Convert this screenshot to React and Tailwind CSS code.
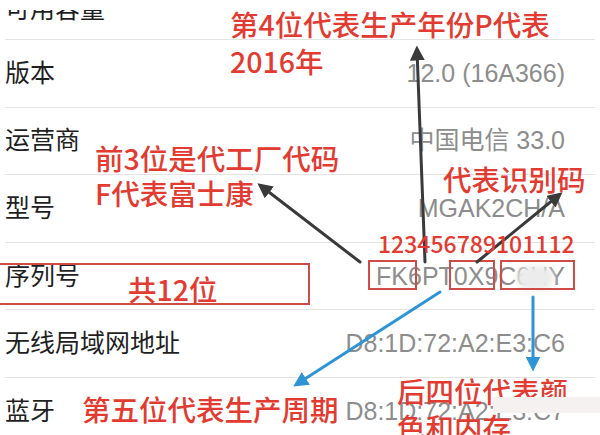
import React from "react";

const rows = [
  { label: "可用容量", value: "", first: true },
  { label: "版本", value: "12.0 (16A366)" },
  { label: "运营商", value: "中国电信 33.0" },
  { label: "型号", value: "MGAK2CH/A" },
  { label: "序列号", value: "FK6PT0X9C6HY" },
  { label: "无线局域网地址", value: "D8:1D:72:A2:E3:C6" },
  { label: "蓝牙", value: "D8:1D:72:A2:E3:C7" },
];

const sysFont = { fontFamily: '"Liberation Sans", "Noto Sans CJK SC", sans-serif' };
const noteFont = { fontFamily: '"Noto Sans CJK SC", "Noto Sans", sans-serif' };

function Row({ label, value, first }) {
  return (
    <div
      className={`mx-[5px] h-[67.6px] shrink-0 flex items-center justify-between border-b border-[#e4e4e4] ${
        first ? "pt-[8px]" : ""
      }`}
    >
      <span className="text-[25px] leading-none text-[#1f1f1f]">{label}</span>
      <span className="pr-[30px] text-[25px] leading-none text-[#8d8d8d]">{value}</span>
    </div>
  );
}

function Arrows() {
  return (
    <svg className="absolute inset-0" width="600" height="435" viewBox="0 0 600 435">
      <defs>
        <marker id="headDark" markerWidth="5" markerHeight="5" refX="3.5" refY="2.5" orient="auto" markerUnits="strokeWidth">
          <path d="M0,0 L5,2.5 L0,5 z" fill="#3a3a3a" />
        </marker>
        <marker id="headBlue" markerWidth="5" markerHeight="5" refX="3.5" refY="2.5" orient="auto" markerUnits="strokeWidth">
          <path d="M0,0 L5,2.5 L0,5 z" fill="#2d95d5" />
        </marker>
      </defs>
      <g strokeWidth="3" strokeLinecap="round">
        <line x1="425" y1="262" x2="417" y2="50" stroke="#3a3a3a" markerEnd="url(#headDark)" />
        <line x1="360" y1="262" x2="261" y2="186" stroke="#3a3a3a" markerEnd="url(#headDark)" />
        <line x1="477" y1="262" x2="559" y2="195" stroke="#3a3a3a" markerEnd="url(#headDark)" />
        <line x1="440" y1="292" x2="297" y2="384" stroke="#2d95d5" markerEnd="url(#headBlue)" />
        <line x1="533" y1="297" x2="533" y2="367" stroke="#2d95d5" markerEnd="url(#headBlue)" />
      </g>
    </svg>
  );
}

export default function App() {
  return (
    <div className="relative w-[600px] h-[435px] overflow-hidden bg-white" style={sysFont}>
      {/* settings list, top row clipped under the white band */}
      <div className="pt-[10px] h-[435px] flex flex-col">
        <div className="flex-1 overflow-hidden flex flex-col">
          <div className="-mt-[37.6px] flex flex-col">
            {rows.map((r) => (
              <Row key={r.label} {...r} />
            ))}
          </div>
        </div>
      </div>

      {/* smudge over part of the serial */}
      <div className="absolute left-[516px] top-[266px] w-[38px] h-[24px] rounded-full bg-[#ececec] blur-[3px]" />

      {/* red frames */}
      <div className="absolute left-[-2px] top-[263px] w-[312px] h-[42px] border-2 border-[#cf4b46]" />
      <div className="absolute left-[368px] top-[260px] w-[49px] h-[30px] border-2 border-[#cf4b46]" />
      <div className="absolute left-[449px] top-[260px] w-[46px] h-[30px] border-2 border-[#cf4b46]" />
      <div className="absolute left-[500px] top-[260px] w-[75px] h-[30px] border-2 border-[#cf4b46]" />

      <Arrows />

      {/* notes */}
      <div className="absolute inset-0 text-[#e23b31] font-medium" style={noteFont}>
        <div className="absolute left-[230px] top-[5px] text-[28.5px] leading-[37px]">
          第4位代表生产年份P代表
          <br />
          2016年
        </div>
        <div className="absolute left-[95px] top-[140px] text-[28.5px] leading-[35px]">
          前3位是代工厂代码
          <br />
          F代表富士康
        </div>
        <div className="absolute left-[443px] top-[160px] text-[28.5px] leading-[37px]">代表识别码</div>
        <div className="absolute left-[378px] top-[232px] text-[23px] leading-none">123456789101112</div>
        <div className="absolute left-[128px] top-[270px] text-[28.5px] leading-[37px]">共12位</div>
        <div className="absolute left-[82px] top-[390px] text-[28.5px] leading-[37px]">第五位代表生产周期</div>
        <div className="absolute left-[397px] top-[373px] text-[28.5px] leading-[36px]">
          后四位代表颜
          <br />
          色和内存
        </div>
      </div>

      {/* pale band */}
      <div className="absolute left-[493px] top-[397px] w-[107px] h-[16px] bg-[#f4f1f0]" />
    </div>
  );
}
